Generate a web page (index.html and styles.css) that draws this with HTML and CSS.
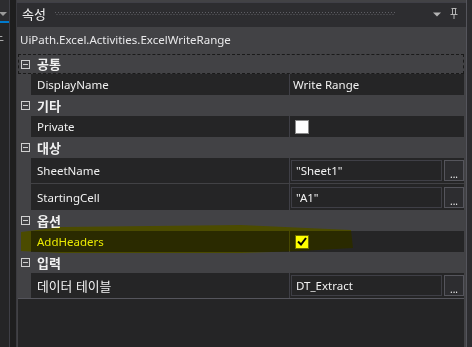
FILE: index.html
```html
<!DOCTYPE html>
<html lang="ko">
<head>
<meta charset="utf-8">
<link rel="stylesheet" href="styles.css">
</head>
<body>
<div class="app">
  <div class="side">
    <div class="side-top">
      <svg class="side-arrow" width="8" height="4" viewBox="0 0 8 4"><path d="M0 0H8L4 4Z" fill="#9a9a9a"/></svg>
    </div>
    <div class="side-accent"></div>
    <div class="side-body"><span class="side-glyph">느</span></div>
  </div>
  <div class="gutter"></div>
  <div class="panel">
    <div class="titlebar">
      <span class="title">속성</span>
      <div class="grip"></div>
      <svg class="tb-arrow" width="8" height="5" viewBox="0 0 8 5"><path d="M0 0.5H8L4 4.5Z" fill="#b4b4b4"/></svg>
      <svg class="tb-pin" width="8" height="11" viewBox="0 0 8 11"><path d="M1.5 0.5H6.5M2.5 0.5V6.5M5.5 0.5V6.5M0.5 6.5H7.5M4 6.5V11" stroke="#b4b4b4" stroke-width="1" fill="none"/></svg>
    </div>
    <div class="objname">UiPath.Excel.Activities.ExcelWriteRange</div>
    <div class="grid">
      <div class="cat focused"><span class="minus"></span><span class="cat-label">공통</span></div>
      <div class="prop"><div class="name">DisplayName</div><div class="val"><span class="val-text">Write Range</span></div></div>

      <div class="cat"><span class="minus"></span><span class="cat-label">기타</span></div>
      <div class="prop"><div class="name">Private</div><div class="val"><span class="check"></span></div></div>

      <div class="cat"><span class="minus"></span><span class="cat-label">대상</span></div>
      <div class="prop tall first"><div class="name">SheetName</div><div class="val"><div class="box">"Sheet1"</div><div class="dots">...</div></div></div>
      <div class="prop tall"><div class="name">StartingCell</div><div class="val"><div class="box">"A1"</div><div class="dots">...</div></div></div>

      <div class="cat"><span class="minus"></span><span class="cat-label">옵션</span></div>
      <div class="prop hl"><div class="name">AddHeaders</div><div class="val"><span class="check on"><svg width="10" height="9" viewBox="0 0 10 9"><path d="M1 4.5L4 7.5L9 1" stroke="#000" stroke-width="2" fill="none"/></svg></span></div></div>

      <div class="cat"><span class="minus"></span><span class="cat-label">입력</span></div>
      <div class="prop tall last"><div class="name"><span class="ko">데이터 테이블</span></div><div class="val"><div class="box">DT_Extract</div><div class="dots">...</div></div></div>

      <svg class="marker" width="360" height="32" viewBox="0 0 360 32"><path d="M2 8 L42 3 L222 1 L332 6 L334 24 L282 27 L222 29 L42 29 L2 27 Z" fill="#ffff00"/></svg>
    </div>
    <div class="empty"></div>
  </div>
  <div class="scroll"></div>
</div>
</body>
</html>
```
FILE: styles.css
```css
* { box-sizing: border-box; }
html, body { margin: 0; padding: 0; }
body {
  width: 472px;
  height: 347px;
  overflow: hidden;
  background: #2d2d30;
  font-family: "Noto Sans", "Noto Sans CJK KR", sans-serif;
  font-size: 11.5px;
  color: #f1f1f1;
}
.app {
  display: flex;
  width: 472px;
  height: 347px;
}
.side {
  width: 10px;
  display: flex;
  flex-direction: column;
  border-right: 1px solid #3f3f46;
  background: #252526;
  overflow: hidden;
}
.side-top {
  height: 21px;
  background: #2d2d30;
  position: relative;
}
.side-arrow { position: absolute; left: -1px; top: 12px; }
.side-accent { height: 2px; background: #007acc; }
.side-body { flex: 1; padding-top: 7px; }
.side-glyph {
  display: block;
  margin-left: -7px;
  font-family: "Noto Sans CJK KR", sans-serif;
  font-size: 12px;
  color: #d0d0d0;
  line-height: 14px;
}
.gutter { width: 6px; background: #1e1e1e; }
.panel {
  flex: 1;
  display: flex;
  flex-direction: column;
  background: #424245;
  border-left: 1px solid #3a3a3f;
  border-right: 1px solid #55555c;
}
.titlebar {
  height: 25px;
  margin-top: 2px;
  border-top: 1px solid #3f3f46;
  background: #2d2d30;
  display: flex;
  align-items: center;
  padding: 0 8px 0 5px;
}
.title {
  font-family: "Noto Sans CJK KR", sans-serif;
  font-size: 13px;
  color: #f1f1f1;
  line-height: 14px;
  margin-top: -3px;
}
.grip {
  flex: 1;
  height: 4px;
  margin: 0 38px 0 9px;
  background-image:
    radial-gradient(circle at 0.5px 0.5px, #5e5e64 0.7px, transparent 0.8px),
    radial-gradient(circle at 0.5px 0.5px, #5e5e64 0.7px, transparent 0.8px);
  background-size: 3px 2px, 3px 2px;
  background-position: 0 0, 1.5px 2px;
  background-repeat: repeat-x, repeat-x;
  margin-top: -2px;
}
.tb-arrow { margin-top: -1px; }
.tb-pin { margin-left: 9px; margin-top: -4px; }
.objname {
  height: 27px;
  padding: 5px 0 0 3px;
  font-size: 11.5px;
  color: #e8e8ea;
  line-height: 16px;
}
.grid {
  position: relative;
  margin: 0 2px 0 1px;
  display: flex;
  flex-direction: column;
}
.cat {
  height: 21px;
  display: flex;
  align-items: center;
  padding-left: 2px;
  border: 1px solid transparent;
}
.cat.focused { border: 1px dashed #1a1a1a; height: 20px; }
.minus {
  width: 9px;
  height: 9px;
  border: 1px solid #d0d0d0;
  position: relative;
  margin-right: 7px;
}
.minus::after {
  content: "";
  position: absolute;
  left: 1px;
  right: 1px;
  top: 3px;
  height: 1px;
  background: #d0d0d0;
}
.cat-label {
  font-family: "Noto Sans CJK KR", sans-serif;
  font-weight: 700;
  font-size: 13px;
  color: #f1f1f1;
  line-height: 16px;
}
.prop {
  height: 21px;
  display: flex;
  padding-left: 13px;
  position: relative;
  z-index: 0;
}
.prop.tall { height: 26px; }
.prop.tall.first { border-bottom: 1px solid #424245; }
.prop.tall.last { border-bottom: 1px solid #55555c; height: 26px; }
.name {
  width: 259px;
  background: #252526;
  border-right: 1px solid #3f3f46;
  display: flex;
  align-items: center;
  padding-left: 6px;
  color: #f1f1f1;
  white-space: nowrap;
}
.ko {
  font-family: "Noto Sans CJK KR", sans-serif;
  font-size: 12.8px;
}
.val {
  flex: 1;
  background: #252526;
  display: flex;
  align-items: center;
  padding-left: 3px;
}
.val-text { color: #f1f1f1; }
.check {
  width: 14px;
  height: 14px;
  margin-left: 2px;
  background: #ffffff;
  border: 1px solid #8a8a8a;
  display: flex;
  align-items: center;
  justify-content: center;
}
.check.on { background: #ffff00; border-color: #6b6b00; }
.prop.hl .name { color: #eaea00; }
.box {
  flex: 1;
  height: 21px;
  border: 1px solid #3f3f46;
  display: flex;
  align-items: center;
  padding-left: 4px;
  margin-left: -2px;
  color: #f1f1f1;
}
.dots {
  width: 20px;
  height: 21px;
  margin-left: 2px;
  background: #2d2d30;
  border: 1px solid #55555c;
  color: #f1f1f1;
  font-size: 10px;
  line-height: 10px;
  text-align: center;
  padding-top: 8px;
}
.marker {
  position: absolute;
  left: 1px;
  top: 170px;
  mix-blend-mode: color;
  pointer-events: none;
}
.empty {
  flex: 1;
  margin: 0 2px 0 1px;
  background: #252526;
}
.scroll {
  width: 5px;
  background: #2d2d30;
}
```
